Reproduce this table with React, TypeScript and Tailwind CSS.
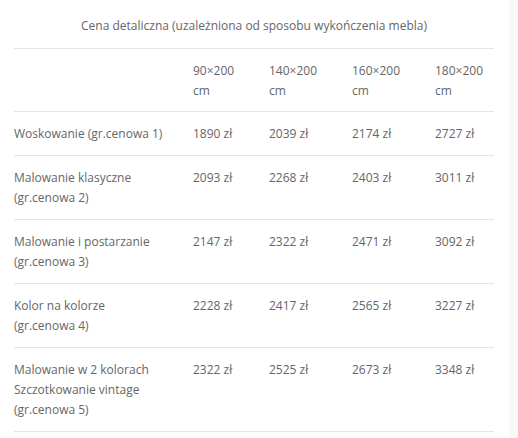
const sizes = ["90×200", "140×200", "160×200", "180×200"];

const rows: { label: string[]; prices: string[] }[] = [
  { label: ["Woskowanie (gr.cenowa 1)"], prices: ["1890 zł", "2039 zł", "2174 zł", "2727 zł"] },
  { label: ["Malowanie klasyczne", "(gr.cenowa 2)"], prices: ["2093 zł", "2268 zł", "2403 zł", "3011 zł"] },
  { label: ["Malowanie i postarzanie", "(gr.cenowa 3)"], prices: ["2147 zł", "2322 zł", "2471 zł", "3092 zł"] },
  { label: ["Kolor na kolorze", "(gr.cenowa 4)"], prices: ["2228 zł", "2417 zł", "2565 zł", "3227 zł"] },
  {
    label: ["Malowanie w 2 kolorach", "Szczotkowanie vintage", "(gr.cenowa 5)"],
    prices: ["2322 zł", "2525 zł", "2673 zł", "3348 zł"],
  },
];

export default function App() {
  return (
    <div className="flex min-h-[438px] w-[518px] bg-white font-['Open_Sans',sans-serif] text-[12px] leading-[20px] text-[#666]">
      <div className="w-[509px] pl-[14px] pr-[15px]">
        <table className="w-[480px] table-fixed border-collapse">
          <caption className="pt-[16px] pb-[12px] text-[12px] leading-[20px]">
            Cena detaliczna (uzależniona od sposobu wykończenia mebla)
          </caption>
          <colgroup>
            <col className="w-[179px]" />
            <col className="w-[76px]" />
            <col className="w-[83px]" />
            <col className="w-[83px]" />
            <col className="w-[59px]" />
          </colgroup>
          <thead>
            <tr className="border-y border-[#e6e6e6]">
              <th className="pt-3 pb-[10px]" />
              {sizes.map((s) => (
                <th key={s} className="pt-3 pb-[10px] pr-2 text-left align-top font-normal">
                  {s}
                  <br />
                  cm
                </th>
              ))}
            </tr>
          </thead>
          <tbody>
            {rows.map((r) => (
              <tr key={r.label[0]} className="border-b border-[#e6e6e6]">
                <td className="pt-3 pb-[11px] pr-2 align-top">
                  {r.label.map((l) => (
                    <div key={l}>{l}</div>
                  ))}
                </td>
                {r.prices.map((p) => (
                  <td key={p} className="pt-3 pb-[11px] align-top">
                    {p}
                  </td>
                ))}
              </tr>
            ))}
          </tbody>
        </table>
      </div>
      <div className="flex-1 bg-[#f9f9f9]" />
    </div>
  );
}
